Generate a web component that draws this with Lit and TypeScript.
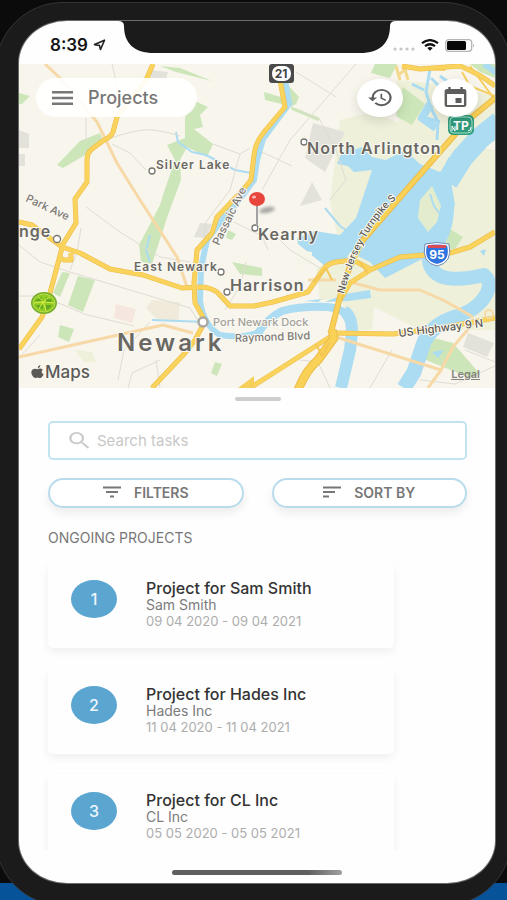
import { LitElement, html, svg, css } from "lit";
import { customElement, property } from "lit/decorators.js";

interface Project {
  id: number;
  title: string;
  client: string;
  dates: string;
}

const PROJECTS: Project[] = [
  { id: 1, title: "Project for Sam Smith", client: "Sam Smith", dates: "09 04 2020 - 09 04 2021" },
  { id: 2, title: "Project for Hades Inc", client: "Hades Inc", dates: "11 04 2020 - 11 04 2021" },
  { id: 3, title: "Project for CL Inc", client: "CL Inc", dates: "05 05 2020 - 05 05 2021" },
];

const MAJOR_ROADS = [
  "M153 64L146 80L117 117L113 132Q111 137 104 140L92 149Q87 153 87 160V182L75 199L76 223L63 244L58 263L50 293L42 317L19 349",
  "M19 222L32 225L62 247L80 253L110 269L143 275L182 288L203 287Q211 288 217 292L230 306L254 306L273 302L308 292L323 270Q328 263 336 262L353 260L370 269",
  "M280 80L285 107L264 132Q255 143 254 155L251 180L241 192L217 217L212 233L197 250L194 283L195 303L203 317L202 327L195 340L185 353L152 388",
  "M495 232L470 247L450 253L400 257L370 270L350 283L340 300",
  "M495 318L440 328L393 334L333 333",
  "M333 335L253 386L248 390",
  "M402 66L420 69L460 66Q480 74 495 86",
  "M60 258L64 260H71V253",
];

const MINOR_ROADS = [
  "M45 64L60 78L97 122L117 163L140 200L177 257L187 287",
  "M19 357L163 325L193 333",
  "M350 282L380 290L420 290L445 301L473 317",
  "M336 337L441 370L428 388",
  "M441 370L453 347L476 320",
  "M308 280H336",
];

const LANES = [
  "M112 64L117 86",
  "M86 118V142M111 138Q140 128 154 130T180 136M112 144L130 153L146 170",
  "M86 207L120 232L160 257L190 262",
  "M19 245L40 262L70 272L190 308L200 324",
  "M19 296H40L66 306L84 314L134 326",
  "M213 144L240 154L250 148M240 154L230 190L206 222L204 240",
  "M118 380L124 350L150 322M128 388L132 373L160 360M160 388L156 360",
  "M19 358L40 335",
  "M296 72L336 97M356 64L290 140L262 190M262 152L292 166",
  "M300 110L320 120L336 150L346 180L330 200",
  "M270 230L290 250L310 262L320 268M234 222L262 236L268 250",
  "M225 310L240 286L246 262",
  "M420 380L455 384L495 366M465 350L495 362",
  "M300 360L318 362L330 388M370 388L392 350",
  "M81 228L77 252L70 270",
];

const GREENS = [
  "M195 101L208 107L200 115L203 127L194 129L213 144L207 157L187 147L180 160L181 180L168 215L152 264L141 262L139 245L160 205L163 195L175 160L167 145L185 138L185 117Z",
  "M100 133L103 140L85 155L63 168L57 165L80 141Z",
  "M19 93L30 96L22 104L19 104Z",
  "M62 272L70 273L60 297L53 293Z",
  "M78 276L95 280L83 312L68 305Z",
  "M60 325L74 329L69 342L58 337Z",
  "M215 362L222 364L217 376L211 373Z",
  "M160 66L180 68L212 81L176 72Z",
  "M375 64L397 64L390 78L371 73Z",
  "M403 87L425 104L412 125L396 116L398 98Z",
  "M288 85L299 97L296 104L290 107Z",
  "M264 92L284 98L282 104L265 100Z",
  "M290 106L320 118L318 121L292 110Z",
  "M228 230L236 234L232 240L226 238Z",
  "M232 262L262 268L262 276L240 274Z",
  "M430 337L453 343L480 374L470 378L421 358Z",
  "M450 229L463 237L455 249L444 250Z",
  "M470 64H495V78L480 72Z",
];

const PALE_GREENS = [
  "M340 120L372 112L396 122L440 140L495 150L495 330L420 330L360 300L320 300L316 270L340 250L330 200Z",
  "M396 80L440 84L495 96V130L455 150L400 130Z",
  "M75 350L92 352L96 362L84 362Z",
  "M340 300L375 300L372 330H356Z",
];

const GREYS = [
  "M313 123L345 132L325 172L305 158Z",
  "M200 223L212 224L206 238L194 237Z",
  "M312 182L322 200L300 206Z",
  "M468 333L494 343L487 357L463 347Z",
  "M19 130L29 134V148H19Z",
  "M19 154H25V166H19Z",
  "M152 70L168 72L166 80L150 78Z",
];

const LAKES = [
  "M337 164L341 154L352 145L353 150L362 147L372 157L386 160L405 150L420 164L450 176L455 205L440 240L424 258L385 278L370 262L350 252L345 262L325 266L298 244L297 238L315 231L340 235L356 218L366 188L372 170L354 172L348 166Z",
  "M325 302L345 294L370 290L371 298L348 301Z",
  "M304 301L322 299L318 302Z",
];

const TURNPIKE = "M495 98L466 122L430 163L396 202L363 240Q350 262 341 293L331 332";
const TURNPIKE_SOUTH = "M332 330L334 338L318 360Q306 370 298 390";

const ICONS = {
  menu: svg`<path d="M1 3H23M1 9H23M1 15H23" fill="none" stroke="#777" stroke-width="2.4"/>`,
  history: svg`<path d="M13 3a9 9 0 0 0-9 9H1l3.900 3.900.070.140L9 12H6a7 7 0 1 1 7 7 6.960 6.960 0 0 1-4.940-2.060l-1.420 1.420A8.960 8.960 0 0 0 13 21a9 9 0 0 0 0-18zm-1 5v5l4.280 2.540.720-1.210-3.500-2.080V8H12z" fill="#5d5d5d"/>`,
  calendar: svg`<path d="M17 12h-5v5h5v-5zM16 1v2H8V1H6v2H5c-1.110 0-2 .9-2 2v14a2 2 0 0 0 2 2h14a2 2 0 0 0 2-2V5a2 2 0 0 0-2-2h-1V1h-2zm3 18H5V8h14v11z" fill="#5d5d5d"/>`,
  search: svg`<path d="M15.500 14h-.790l-.280-.270A6.470 6.470 0 0 0 16 9.500 6.500 6.500 0 1 0 9.500 16c1.610 0 3.090-.590 4.230-1.570l.270.280v.790l5 4.990L20.490 19l-4.990-5zm-6 0A4.500 4.500 0 1 1 14 9.500 4.490 4.490 0 0 1 9.500 14z" fill="#cacaca"/>`,
  filter: svg`<path d="M0 1.500H18M3 6H15M7 10.500H11" fill="none" stroke="#777" stroke-width="1.800"/>`,
  sort: svg`<path d="M0 1.500H18M0 6H12M0 10.500H6" fill="none" stroke="#777" stroke-width="1.800"/>`,
};

@customElement("area-map")
export class AreaMap extends LitElement {
  static styles = css`
    :host { display: block; }
    svg { display: block; width: 100%; height: auto; }
    text {
      font-family: Inter, "Liberation Sans", sans-serif;
      font-weight: 600;
      fill: #6a6863;
      stroke: #fbf9f3;
      stroke-width: 2px;
      stroke-linejoin: round;
      paint-order: stroke;
    }
    .village { font-size: 12px; letter-spacing: 1px; }
    .town { font-size: 16px; letter-spacing: 1px; }
    .city { font-size: 24px; letter-spacing: 3px; }
    .faint { font-size: 11px; font-weight: 500; fill: #a3a19b; }
    .street { font-size: 11px; font-weight: 500; fill: #7b7973; }
    .road { font-size: 11px; font-weight: 500; fill: #5b5953; }
    .curved { font-size: 10px; }
    .brand { font-size: 17px; font-weight: 500; fill: #5c5a57; }
    .shield { stroke: none; font-size: 12px; font-weight: 700; fill: #444; text-anchor: middle; }
    .onblue { fill: #fff; }
  `;

  render() {
    const fill = (list: string[], color: string) => list.map((d) => svg`<path d=${d} fill=${color}/>`);
    const line = (list: string[], color: string, w: number) =>
      list.map((d) => svg`<path d=${d} fill="none" stroke=${color} stroke-width=${w} stroke-linejoin="round"/>`);
    return html`
      <svg viewBox="19 64 476 324" role="img" aria-label="Map of Newark">
        <defs>
          <path id="turnpike" d="M344 294Q352 262 365 239T397 198L412 180"/>
          <filter id="soft" x="-50%" y="-50%" width="200%" height="200%"><feGaussianBlur stdDeviation="1.500"/></filter>
        </defs>
        <rect x="19" y="64" width="476" height="324" fill="#f8f5ed"/>
        ${fill(PALE_GREENS, "#eef0da")}
        ${fill(GREYS, "#e2e1da")}
        <path d="M116 304L136 309L132 323L114 318Z" fill="#f6e6e0"/>
        <path d="M152 300L180 302L178 322L158 320L146 308Z" fill="#f0eadb"/>
        ${fill(GREENS, "#cce6b9")}
        ${fill(LAKES, "#abdcf1")}
        <g fill="none" stroke="#abdcf1" stroke-linejoin="round">
          <path stroke-width="6" d="M285 80L289 104L263 139L257 160L254 180L243 195L222 220L207 240L201 268L200 300Q203 325 220 335Q245 339 262 331"/>
          <path stroke-width="8" d="M258 333Q268 318 282 311Q300 306 328 307Q345 309 351 320"/>
          <path stroke-width="12" d="M344 311Q352 316 352 332L350 350L341 388"/>
          <path stroke-width="22" d="M500 122L480 138L462 158L447 182"/>
          <path stroke-width="14" d="M455 160L443 185L447 210Q446 235 430 252Q426 268 440 276Q455 282 484 275Q494 283 484 298Q474 312 452 318"/>
          <path stroke-width="15" d="M456 317Q430 325 423 345L414 372L404 388"/>
          <path stroke-width="6" d="M438 190L425 212M500 75L484 64"/>
          <path stroke-width="3" d="M430 69L426 92L431 108L438 122L437 140M424 90L412 84M431 78L455 102L470 98M440 122L420 116M440 76L462 92"/>
          <path stroke-width="8" d="M430 104L422 118L436 128"/>
          <path stroke-width="2" d="M176 132L178 142L192 152L206 155L235 170L251 173M150 235L146 250L150 262M152 320L206 322M325 208L340 226L350 233"/>
        </g>
        <path d="M432 186L441 206L437 222L428 232L418 218L420 200Z" fill="#e3edce"/>
        <path d="M299 250L312 252L311 264L298 266L294 258Z" fill="#f6f5ea"/>
        <path d="M480 251L486 249L484 256Z" fill="#abdcf1"/>
        <path d="M432 352L444 350L438 358Z" fill="#abdcf1"/>
        <path d="M430 194L434 206L440 214" stroke="#abdcf1" stroke-width="2" fill="none"/>
        ${line(LANES, "#dfdcd4", 1)}
        ${line(MINOR_ROADS, "#f6d9a6", 3)}
        <path d="M396 66L400 80M404 66L408 80M398 76L408 66" fill="none" stroke="#f3d98c" stroke-width="3"/>
        <path d="M403 68L445 70M462 72L470 86L495 96M470 66L495 100" fill="none" stroke="#f5cf5f" stroke-width="2"/>
        ${line(MAJOR_ROADS, "#ecbb4b", 5)}
        ${line(MAJOR_ROADS, "#f9d35c", 4)}
        ${line([TURNPIKE], "#edbc4b", 6)}
        ${line([TURNPIKE], "#f9d157", 4)}
        ${line([TURNPIKE_SOUTH], "#edbc4b", 9)}
        ${line([TURNPIKE_SOUTH], "#f9d157", 7)}
        <path d="M316 344L322 356L330 342M314 282L326 268L332 280M360 262L368 274" fill="none" stroke="#f3c656" stroke-width="2"/>
        <path d="M238 388L254 376V388Z" fill="#f6cf5a"/>
        <circle cx="489" cy="314" r="4" fill="none" stroke="#f6d9a6" stroke-width="2"/>

        <g fill="#fff" stroke="#77756f" stroke-width="1.300">
          <circle cx="152" cy="171" r="3"/><circle cx="304" cy="142" r="3"/><circle cx="57" cy="239" r="3.500"/>
          <circle cx="221" cy="272" r="3"/><circle cx="227" cy="292" r="3"/><circle cx="255" cy="228" r="3"/>
        </g>
        <circle cx="203" cy="322" r="4.500" fill="#fff" stroke="#aaa8a3" stroke-width="2.500"/>

        <text class="village" x="156" y="169">Silver Lake</text>
        <text class="town" x="307" y="154">North Arlington</text>
        <text class="town" x="258" y="240">Kearny</text>
        <text class="village" x="134" y="271">East Newark</text>
        <text class="town" x="230" y="291">Harrison</text>
        <text class="city" x="117" y="351">Newark</text>
        <text class="town" x="19" y="237">nge</text>
        <text class="faint" x="213" y="326">Port Newark Dock</text>
        <text class="street" transform="translate(235 342) rotate(-2)">Raymond Blvd</text>
        <text class="street" transform="translate(25 201) rotate(25)">Park Ave</text>
        <text class="street" transform="translate(219 246) rotate(-64)">Passaic Ave</text>
        <text class="road curved"><textPath href="#turnpike">New Jersey Turnpike S</textPath></text>
        <text class="road" transform="translate(399 337) rotate(-7)">US Highway 9 N</text>

        <rect x="269" y="64" width="25" height="19" rx="3" fill="#4a4a4a"/>
        <rect x="272" y="66" width="19" height="15" rx="7" fill="#fff"/>
        <text class="shield" x="281" y="78">21</text>

        <path d="M426 245Q437 242 448 245Q452 262 437 265Q422 262 426 245Z" fill="#2f74e0" stroke="#fff" stroke-width="2"/>
        <path d="M425 244Q437 241 449 244Q453 263 437 266Q421 263 425 244Z" fill="none" stroke="#6d86b4" stroke-width="1"/>
        <path d="M428 245H446V248H428Z" fill="#d94b57"/>
        <text class="shield onblue" x="437" y="259">95</text>

        <rect x="448" y="115" width="26" height="20" rx="5" fill="#2f9c7c"/>
        <rect x="450" y="117" width="22" height="16" rx="4" fill="none" stroke="#a7dccb"/>
        <text class="shield onblue" x="461" y="130">TP</text>
        <path d="M452 131V126L455 131V126M468 131Q471 131 471 127" fill="none" stroke="#fff" stroke-width="1"/>

        <ellipse cx="44" cy="303" rx="13" ry="11" fill="#76ad2c"/>
        <ellipse cx="44" cy="303" rx="11" ry="9" fill="#8fcb25" stroke="#b9e04a"/>
        <path d="M36 300L41 297L43 301H35ZM46 297L52 300L51 302H46ZM36 305H43V309L38 308ZM46 305H52L49 309L46 310Z" fill="#62a821"/>
        <path d="M34 303Q44 301 54 303M39 309Q43 300 50 297M38 297Q44 300 46 311" fill="none" stroke="#dcec48" stroke-width="1"/>

        <ellipse cx="267" cy="210" rx="8" ry="3" fill="#777" opacity=".6" filter="url(#soft)" transform="rotate(-12 267 210)"/>
        <path d="M257 205V226" stroke="#a2a2a2" stroke-width="2"/>
        <ellipse cx="257" cy="199" rx="8" ry="7" fill="#e8463c"/>
        <ellipse cx="254" cy="197" rx="2" ry="1.500" fill="#f9bdb8"/>

        <path transform="translate(31 365)" d="M9.500 0Q9.700 2.300 6.800 3.400Q6.600 1 9.500 0ZM6.700 4.300Q9.500 2.600 11.800 4.700Q9 7 12.600 9.400Q10.300 14 7.800 12.900Q6.500 12.200 5 12.900Q2.800 14 .7 9.600Q-.6 5 2.700 3.900Q4.500 3.400 6.700 4.300Z" fill="#5c5a57"/>
        <text class="brand" x="45" y="378">Maps</text>
      </svg>
    `;
  }
}

@customElement("project-card")
export class ProjectCard extends LitElement {
  @property({ attribute: false }) project!: Project;

  static styles = css`
    :host { display: block; }
    .card {
      display: flex;
      gap: 29px;
      padding: 18px 23px 19px;
      border-radius: 5px;
      background: #fefefe;
      box-shadow: 0 4px 8px rgba(0, 0, 0, 0.06);
    }
    .badge {
      display: grid;
      place-items: center;
      flex: none;
      width: 46px;
      height: 38px;
      border-radius: 50%;
      background: #5ba5d1;
      color: #eef7fc;
      font-size: 16px;
      font-weight: 500;
    }
    .body { min-width: 0; }
    h3, p { margin: 0; line-height: 16px; white-space: nowrap; }
    h3 { font-size: 16px; font-weight: 500; color: #333; line-height: 17px; }
    .client { font-size: 14px; color: #7c7c7c; }
    .dates { font-size: 13px; color: #adadad; }
  `;

  render() {
    const p = this.project;
    return html`
      <article class="card">
        <span class="badge">${p.id}</span>
        <div class="body">
          <h3>${p.title}</h3>
          <p class="client">${p.client}</p>
          <p class="dates">${p.dates}</p>
        </div>
      </article>
    `;
  }
}

@customElement("app-root")
export class AppRoot extends LitElement {
  static styles = css`
    :host {
      display: flex;
      flex-direction: column;
      height: 100vh;
      overflow: hidden;
      background: linear-gradient(to top, #07539a 17px, #0b0b0b 17px);
      font-family: Inter, "Liberation Sans", sans-serif;
      color: #777;
    }
    * { box-sizing: border-box; }
    button, input { font: inherit; color: inherit; }
    button { cursor: pointer; }
    .phone {
      flex: 1;
      min-height: 0;
      display: flex;
      margin: 2px -5px -6px;
      padding: 18px 16px 22px 23px;
      border: 1px solid #343434;
      border-radius: 68px;
      background: #1b1b1b;
    }
    .screen {
      position: relative;
      flex: 1;
      min-width: 0;
      display: flex;
      flex-direction: column;
      overflow: hidden;
      border-radius: 48px / 42px;
      background: #fefefe;
      box-shadow: 0 0 0 1px #6a6a6a;
    }
    .notch {
      position: absolute;
      top: -1px;
      left: 50%;
      width: 278px;
      margin-left: -139px;
    }
    .status {
      flex: none;
      display: flex;
      align-items: center;
      justify-content: space-between;
      height: 43px;
      padding: 5px 20px 0 31px;
    }
    .time { display: flex; align-items: center; gap: 5px; color: #151515; font-size: 17px; font-weight: 600; line-height: 20px; }
    .signals { display: flex; align-items: center; gap: 6px; }
    svg { display: block; flex: none; }
    .map { position: relative; flex: none; }
    .toolbar {
      position: absolute;
      inset: 14px 17px auto 17px;
      display: flex;
      align-items: center;
      gap: 29px;
    }
    .title {
      display: flex;
      align-items: center;
      gap: 14px;
      width: 161px;
      height: 39px;
      margin: 0 auto 0 0;
      padding: 0 15px;
      border: 0;
      border-radius: 20px;
      background: rgba(255, 255, 255, 0.92);
      font-size: 18px;
      font-weight: 500;
      color: #777;
    }
    .round {
      display: grid;
      place-items: center;
      width: 46px;
      height: 38px;
      padding: 0;
      border: 0;
      border-radius: 50%;
      background: rgba(255, 255, 255, 0.96);
      box-shadow: 0 4px 12px rgba(0, 0, 0, 0.12);
    }
    .legal {
      position: absolute;
      right: 15px;
      bottom: 8px;
      font-size: 11px;
      font-weight: 600;
      line-height: 12px;
      color: #85837d;
    }
    .sheet {
      flex: 1;
      min-height: 0;
      display: flex;
      flex-direction: column;
      padding: 9px 28px 0 29px;
    }
    .grip { flex: none; align-self: center; width: 46px; height: 4px; border-radius: 2px; background: #cdcdcd; }
    .search {
      flex: none;
      display: flex;
      align-items: center;
      gap: 6px;
      height: 39px;
      margin-top: 20px;
      padding: 0 18px;
      border: 2px solid #c3e3f0;
      border-radius: 5px;
      background: #fff;
    }
    .search input { flex: 1; min-width: 0; padding: 0; border: 0; outline: 0; background: none; font-size: 15px; }
    .search input::placeholder { color: #c8c8c8; opacity: 1; }
    .actions { flex: none; display: flex; gap: 28px; margin-top: 18px; }
    .actions button {
      flex: 1;
      display: flex;
      align-items: center;
      justify-content: center;
      gap: 13px;
      height: 30px;
      padding: 0 0 2px;
      border: 2px solid #b9dcec;
      border-radius: 15px;
      background: #fff;
      box-shadow: 0 5px 10px rgba(0, 0, 0, 0.07);
      font-size: 14px;
      font-weight: 600;
    }
    h2 { flex: none; margin: 21px 0 15px; font-size: 14px; font-weight: 400; line-height: 18px; }
    .list {
      flex: 1;
      min-height: 0;
      display: flex;
      flex-direction: column;
      gap: 20px;
      margin: 0 0 0 -12px;
      padding: 0 73px 20px 12px;
      overflow-y: auto;
      scrollbar-width: none;
    }
    .list project-card { flex: none; }
    .home { flex: none; display: flex; justify-content: center; height: 33px; padding-top: 20px; }
    .home span { width: 170px; height: 5px; border-radius: 3px; background: linear-gradient(to right, #5f5f5f 80%, #a0a0a0); }
  `;

  render() {
    return html`
      <div class="phone">
        <main class="screen">
          <div class="status">
            <span class="time">
              8:39
              <svg width="13" height="12" viewBox="0 0 13 12"><path d="M1.500 5.600L11.500 1.200L7.500 10.500L6.400 6.400Z" fill="none" stroke="#222" stroke-width="1.600" stroke-linejoin="round"/></svg>
            </span>
            <span class="signals">
              <svg width="22" height="12" viewBox="0 0 22 12"><g fill="#c6c6c6"><circle cx="2" cy="10" r="1.600"/><circle cx="8" cy="10" r="1.600"/><circle cx="14" cy="10" r="1.600"/><circle cx="20" cy="10" r="1.600"/></g></svg>
              <svg width="18" height="12" viewBox="0 0 18 12"><path d="M1 4.200Q9-2 17 4.200M4 7.200Q9 3.300 14 7.200" fill="none" stroke="#111" stroke-width="2.200"/><path d="M6.300 9Q9 7 11.700 9L9 11.800Z" fill="#111"/></svg>
              <svg width="30" height="13" viewBox="0 0 30 13"><rect x=".7" y=".7" width="26" height="11.600" rx="3" fill="none" stroke="#b5b5b5" stroke-width="1.300"/><rect x="2" y="2" width="19" height="9" rx="1.500" fill="#080808"/><path d="M28 4.500Q30 6.500 28 8.500Z" fill="#b5b5b5"/></svg>
            </span>
          </div>
          <svg class="notch" height="33" viewBox="0 0 278 33"><path d="M0 0V1Q6 1 6 6C6 23 16 33 36 33H242C262 33 272 23 272 6Q272 1 278 1V0Z" fill="#1b1b1b"/></svg>

          <section class="map">
            <area-map></area-map>
            <div class="toolbar">
              <button class="title"><svg width="23" height="18" viewBox="0 0 24 18">${ICONS.menu}</svg>Projects</button>
              <button class="round" aria-label="History"><svg width="27" height="23" viewBox="0 0 24 24" preserveAspectRatio="none">${ICONS.history}</svg></button>
              <button class="round" aria-label="Calendar"><svg width="29" height="24" viewBox="0 0 24 24" preserveAspectRatio="none">${ICONS.calendar}</svg></button>
            </div>
            <a class="legal" href="#legal">Legal</a>
          </section>

          <section class="sheet">
            <span class="grip"></span>
            <label class="search">
              <svg width="23" height="19" viewBox="2 2 20 20" preserveAspectRatio="none">${ICONS.search}</svg>
              <input type="search" placeholder="Search tasks" aria-label="Search tasks" />
            </label>
            <div class="actions">
              <button><svg width="18" height="12" viewBox="0 0 18 12">${ICONS.filter}</svg>FILTERS</button>
              <button><svg width="18" height="12" viewBox="0 0 18 12">${ICONS.sort}</svg>SORT BY</button>
            </div>
            <h2>ONGOING PROJECTS</h2>
            <div class="list">
              ${PROJECTS.map((p) => html`<project-card .project=${p}></project-card>`)}
            </div>
          </section>
          <div class="home"><span></span></div>
        </main>
      </div>
    `;
  }
}
